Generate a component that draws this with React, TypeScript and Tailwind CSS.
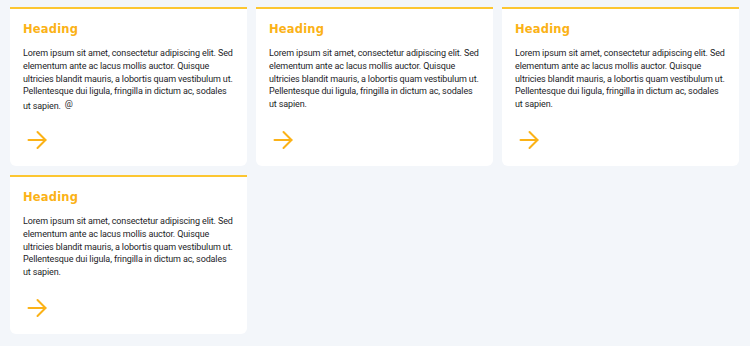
const cards = [
    {
        title: 'Heading',
        body: 'Lorem ipsum sit amet, consectetur adipiscing elit. Sed elementum ante ac lacus mollis auctor. Quisque ultricies blandit mauris, a lobortis quam vestibulum ut. Pellentesque dui ligula, fringilla in dictum ac, sodales ut sapien.',
        extra: '@',
    },
    {
        title: 'Heading',
        body: 'Lorem ipsum sit amet, consectetur adipiscing elit. Sed elementum ante ac lacus mollis auctor. Quisque ultricies blandit mauris, a lobortis quam vestibulum ut. Pellentesque dui ligula, fringilla in dictum ac, sodales ut sapien.',
    },
    {
        title: 'Heading',
        body: 'Lorem ipsum sit amet, consectetur adipiscing elit. Sed elementum ante ac lacus mollis auctor. Quisque ultricies blandit mauris, a lobortis quam vestibulum ut. Pellentesque dui ligula, fringilla in dictum ac, sodales ut sapien.',
    },
    {
        title: 'Heading',
        body: 'Lorem ipsum sit amet, consectetur adipiscing elit. Sed elementum ante ac lacus mollis auctor. Quisque ultricies blandit mauris, a lobortis quam vestibulum ut. Pellentesque dui ligula, fringilla in dictum ac, sodales ut sapien.',
    },
]

const Arrow = () => (
    <svg width="20" height="20" viewBox="0 0 20 20" fill="none" stroke="#fbb217" strokeWidth="2" strokeLinecap="round" strokeLinejoin="round">
        <path d="M1.5 10h17" />
        <path d="M10.5 2l8 8-8 8" />
    </svg>
)

export default function App() {
    return (
        <div className="min-h-screen bg-[#f3f6fa] pt-[7px] pl-[10px] pr-[11px] pb-3" style={{ fontFamily: 'Roboto, sans-serif' }}>
            <div className="grid grid-cols-3 gap-[9px]">
                {cards.map((card, i) => (
                    <div key={i} className="h-[159px] bg-white border-t-2 border-[#fcc631] rounded-b-md px-[13px] pt-[13px] flex flex-col">
                        <h2 className="text-[11.5px] font-bold text-[#fbb217] leading-[14px] tracking-[0.2px]" style={{ fontFamily: '"DejaVu Sans", sans-serif' }}>
                            {card.title}
                        </h2>
                        <p className="mt-[11px] text-[9px] leading-[12.8px] tracking-[-0.12px] text-[#1d1d1f]">
                            {card.body}
                            {card.extra && <span className="ml-[4px] align-[2px]">{card.extra}</span>}
                        </p>
                        <div className="mt-auto mb-[16px] pl-[4px]">
                            <Arrow />
                        </div>
                    </div>
                ))}
            </div>
        </div>
    )
}
